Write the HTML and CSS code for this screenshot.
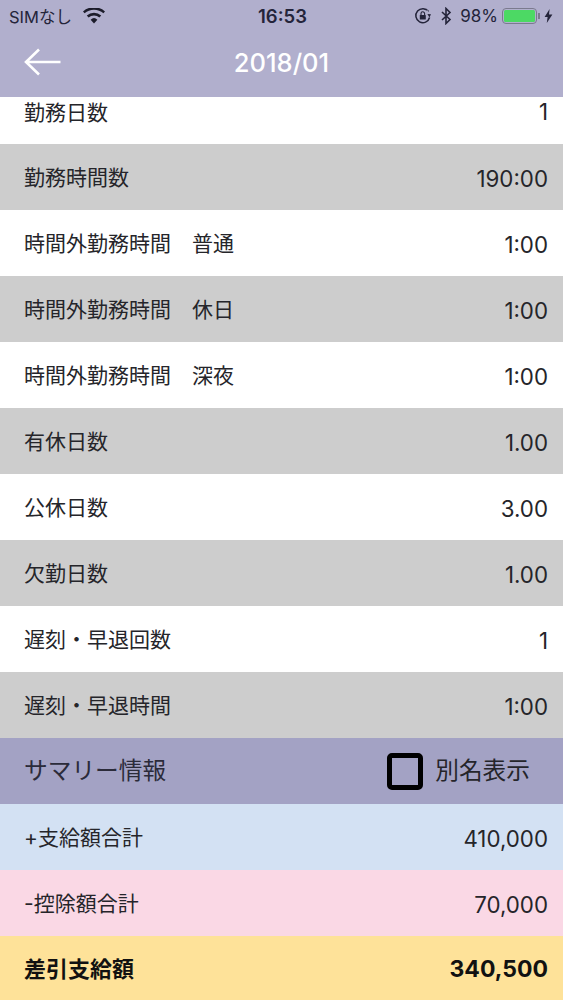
FILE: index.html
```html
<!DOCTYPE html>
<html lang="ja">
<head>
<meta charset="utf-8">
<title>2018/01</title>
<link rel="stylesheet" href="styles.css">
</head>
<body>
<div class="screen">
  <header class="head">
    <div class="status">
      <div class="st-left">
        <span class="carrier">SIMなし</span>
        <svg class="wifi" width="22" height="16" viewBox="0 0 22 16"><path d="M11 15.5 7.6 11.7a5 5 0 0 1 6.8 0Z" fill="#1c1c2a"/><path d="M5.6 9.6a8 8 0 0 1 10.8 0l1.8-2a10.8 10.8 0 0 0-14.4 0Z" fill="#1c1c2a"/><path d="M1.6 5.3a14 14 0 0 1 18.8 0L22 3.4a16.6 16.6 0 0 0-22 0Z" fill="#1c1c2a"/></svg>
      </div>
      <span class="clock">16:53</span>
      <div class="st-right">
        <svg class="lock" width="18" height="18" viewBox="0 0 18 18"><path d="M15.6 10.5A7 7 0 1 1 14.5 4.5" fill="none" stroke="#24243a" stroke-width="1.5"/><path d="M13 2.5 16.6 9 11 8Z" fill="#b0aecb"/><path d="M13.4 7 17 7.2 15.4 10.4Z" fill="#24243a"/><rect x="5.8" y="8" width="6" height="4.6" rx=".6" fill="#24243a"/><path d="M7 8V6.6a1.8 1.8 0 0 1 3.6 0V8" fill="none" stroke="#24243a" stroke-width="1.1"/></svg>
        <svg class="bt" width="12" height="18" viewBox="0 0 12 18"><path d="M2 5 10 12.5 6 16.5V1.5L10 5.5 2 13" fill="none" stroke="#24243a" stroke-width="1.6"/></svg>
        <span class="pct">98%</span>
        <div class="battery"><div class="battery-fill"></div></div>
        <span class="nub"></span>
        <svg class="bolt" width="9" height="14" viewBox="0 0 9 14"><path d="M5.6 0 .6 8h3L2.8 14 8.4 5.6H5Z" fill="#24243a"/></svg>
      </div>
    </div>
    <div class="nav">
      <svg class="back" width="38" height="30" viewBox="0 0 38 30"><path d="M36.500 15H2M15 2.500 2 15l13 12.500" fill="none" stroke="#fff" stroke-width="2.600"/></svg>
      <span class="title">2018/01</span>
    </div>
  </header>
  <main class="list">
    <div class="row first"><span>勤務日数</span><span class="num">1</span></div>
    <div class="row alt"><span>勤務時間数</span><span class="num">190:00</span></div>
    <div class="row"><span>時間外勤務時間　普通</span><span class="num">1:00</span></div>
    <div class="row alt"><span>時間外勤務時間　休日</span><span class="num">1:00</span></div>
    <div class="row"><span>時間外勤務時間　深夜</span><span class="num">1:00</span></div>
    <div class="row alt"><span>有休日数</span><span class="num">1.00</span></div>
    <div class="row"><span>公休日数</span><span class="num">3.00</span></div>
    <div class="row alt"><span>欠勤日数</span><span class="num">1.00</span></div>
    <div class="row"><span>遅刻・早退回数</span><span class="num">1</span></div>
    <div class="row alt"><span>遅刻・早退時間</span><span class="num">1:00</span></div>
    <div class="row summary">
      <span class="sum-title">サマリー情報</span>
      <div class="alias"><span class="box"></span><span>別名表示</span></div>
    </div>
    <div class="row plus"><span>+支給額合計</span><span class="num">410,000</span></div>
    <div class="row minus"><span>-控除額合計</span><span class="num">70,000</span></div>
    <div class="row net"><span>差引支給額</span><span class="num">340,500</span></div>
  </main>
</div>
</body>
</html>
```
FILE: styles.css
```css
html, body {
  margin: 0;
  padding: 0;
  background: #fff;
}
.screen {
  width: 563px;
  height: 1000px;
  overflow: hidden;
  display: flex;
  flex-direction: column;
  font-family: Inter, "Noto Sans CJK JP", sans-serif;
  color: #25252a;
}
.head {
  height: 97px;
  flex: none;
  background: #b1afcd;
  display: flex;
  flex-direction: column;
}
.status {
  height: 32px;
  display: flex;
  align-items: center;
  justify-content: space-between;
  padding: 0 10px 0 9px;
  position: relative;
  color: #24243a;
}
.st-left, .st-right {
  display: flex;
  align-items: center;
}
.carrier {
  font-size: 16.500px;
}
.wifi {
  margin-left: 11px;
}
.clock {
  position: absolute;
  left: 258px;
  font-size: 18.500px;
  font-weight: 600;
}
.lock {
  margin-right: 8px;
}
.bt {
  margin-right: 8px;
}
.pct {
  font-size: 17px;
  margin-right: 4px;
}
.battery {
  width: 35px;
  height: 16px;
  box-sizing: border-box;
  border: 1.500px solid #7b7a8e;
  border-radius: 4px;
  padding: 1px;
}
.battery-fill {
  height: 100%;
  background: #4cd964;
  border-radius: 1.500px;
}
.nub {
  width: 2px;
  height: 6px;
  background: #7b7a8e;
  margin: 0 4px 0 1px;
}
.nav {
  flex: 1;
  display: flex;
  align-items: center;
  justify-content: center;
  position: relative;
  padding-bottom: 4px;
}
.back {
  position: absolute;
  left: 24px;
  top: 15px;
}
.title {
  color: #fff;
  font-size: 25.500px;
  font-weight: 500;
}
.list {
  flex: 1;
  display: flex;
  flex-direction: column;
}
.row {
  height: 66px;
  flex: none;
  box-sizing: border-box;
  display: flex;
  align-items: center;
  justify-content: space-between;
  padding: 0 15px 2px 24px;
  font-size: 21px;
  background: #fff;
}
.row.first {
  height: 47px;
  padding-bottom: 19px;
}
.num {
  font-size: 22.300px;
  margin-top: 4px;
}
.first .num {
  margin-top: 0;
}
.alt {
  background: #cdcdcd;
}
.summary {
  background: #a3a2c4;
  font-size: 23.700px;
  padding-right: 33px;
  padding-bottom: 4px;
}
.sum-title {
  color: #2b2b3a;
}
.alias {
  display: flex;
  align-items: center;
  gap: 12px;
}
.box {
  width: 36px;
  height: 37px;
  box-sizing: border-box;
  border: 5px solid #000;
  border-radius: 5px;
  margin-top: 4px;
}
.plus {
  background: #d3e1f3;
}
.minus {
  background: #fad8e5;
}
.net {
  background: #fee299;
  font-weight: 700;
  color: #111;
  height: 64px;
  font-size: 22px;
}
.net .num {
  font-size: 23px;
}
```
